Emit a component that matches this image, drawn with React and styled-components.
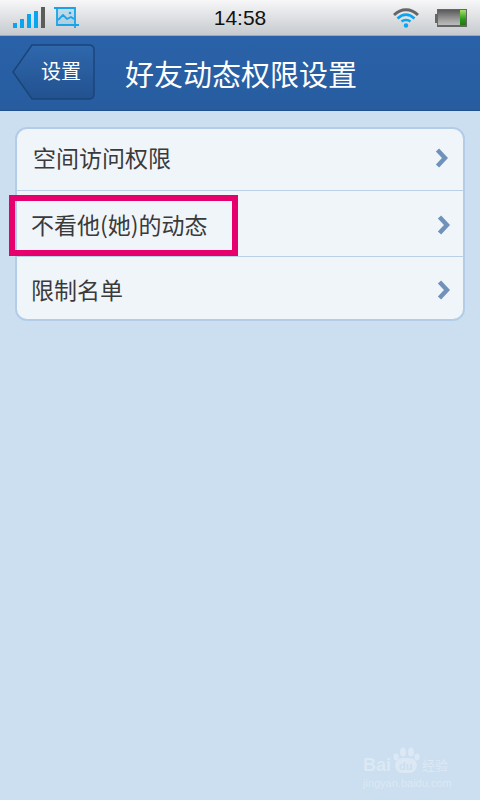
import React from "react";
import styled, { createGlobalStyle } from "styled-components";

const cjk = `"Noto Sans CJK SC", "Liberation Sans", sans-serif`;

const GlobalStyle = createGlobalStyle`
  html, body {
    margin: 0;
    padding: 0;
    background: #cbdff1;
  }
`;

const Screen = styled.div`
  position: relative;
  width: 480px;
  height: 800px;
  overflow: hidden;
  background: #cbdff1;
  font-family: ${cjk};
`;

const StatusBar = styled.div`
  display: grid;
  grid-template-columns: 1fr auto 1fr;
  align-items: center;
  box-sizing: border-box;
  height: 36px;
  background: linear-gradient(#f7f7f8, #c6cace);
  border-bottom: 1px solid #a5a8aa;
`;

const StatusLeft = styled.div`
  display: flex;
  align-items: center;
  gap: 9px;
  padding-left: 13px;
`;

const StatusRight = styled.div`
  display: flex;
  align-items: center;
  justify-content: flex-end;
  gap: 16px;
  padding-right: 13px;
`;

const Clock = styled.div`
  font-family: "Liberation Sans", sans-serif;
  font-size: 21px;
  color: #111;
`;

const Header = styled.div`
  display: flex;
  align-items: center;
  box-sizing: border-box;
  height: 75px;
  padding-left: 12px;
  background: linear-gradient(#2a62a9, #275c9f);
  border-bottom: 1px solid #1f5190;
`;

const BackButton = styled.div`
  position: relative;
  width: 83px;
  height: 56px;
  margin-bottom: 3px;
  display: flex;
  align-items: center;
  justify-content: flex-end;
  padding: 0 14px 2px 0;
  box-sizing: border-box;
  color: #fff;
  font-size: 20px;
`;

const BackShape = styled.svg`
  position: absolute;
  left: 0;
  top: 0;
`;

const BackLabel = styled.span`
  position: relative;
`;

const Title = styled.div`
  margin-left: 30px;
  color: #fff;
  font-size: 29px;
`;

const Content = styled.div`
  padding: 16px 15px 0 15px;
`;

const List = styled.div`
  border: 2px solid #b4cde6;
  border-radius: 12px;
  background: #f0f5fa;
`;

const Row = styled.div`
  display: flex;
  align-items: center;
  justify-content: space-between;
  height: ${(p) => p.$height}px;
  padding: ${(p) => p.$top}px ${(p) => p.$arrowInset}px ${(p) => p.$bottom}px ${(p) => p.$inset}px;
  border-top: ${(p) => (p.$first ? "none" : "1px solid #b9d0e6")};
  font-size: 23px;
  color: #3a3a3a;
`;

const RowLabel = styled.span`
  margin-bottom: 2px;
`;

const Highlight = styled.div`
  position: absolute;
  left: 9px;
  top: 195px;
  width: 229px;
  height: 61px;
  box-sizing: border-box;
  border: 6px solid #e5006d;
`;

const Watermark = styled.div`
  position: absolute;
  left: 363px;
  top: 747px;
  width: 97px;
  color: #dce8f4;
`;

const WatermarkTop = styled.div`
  display: flex;
  align-items: flex-end;
  height: 26px;
  font-family: "Liberation Sans", sans-serif;
  font-size: 18px;
  font-weight: bold;
  line-height: 16px;
`;

const WatermarkCn = styled.span`
  font-family: ${cjk};
  font-size: 13px;
  font-weight: 400;
  line-height: 16px;
  margin-left: 2px;
`;

const WatermarkUrl = styled.div`
  margin-top: 4px;
  font-family: "Liberation Sans", sans-serif;
  font-size: 11px;
  line-height: 12px;
  white-space: nowrap;
`;

const PawLetters = styled.text`
  font-family: "Liberation Sans", sans-serif;
  font-size: 11px;
  font-weight: bold;
  fill: #cbdff1;
`;

function Signal() {
  return (
    <svg width="32" height="21" viewBox="0 0 32 21" style={{ display: "block" }}>
      <rect x="0" y="16" width="4" height="5" fill="#0aa5ef" />
      <rect x="7" y="12" width="4" height="9" fill="#0aa5ef" />
      <rect x="14" y="7" width="4" height="14" fill="#0aa5ef" />
      <rect x="21" y="4" width="4" height="17" fill="#0aa5ef" />
      <rect x="28" y="0" width="4" height="21" fill="#5c5c5c" />
    </svg>
  );
}

function PictureIcon() {
  return (
    <svg width="25" height="21" viewBox="0 0 25 21" fill="none" stroke="#1aa3e8" strokeWidth="1.8" style={{ display: "block" }}>
      <rect x="3" y="2" width="18" height="16" fill="#1aa3e8" fillOpacity="0.2" stroke="none" />
      <path d="M0 1 H21 V21 M3 0 V18 H25" />
      <path d="M4 13 L9 8 L13 12 L17 10 L20 12" />
      <circle cx="16" cy="6" r="1.3" fill="#1aa3e8" stroke="none" />
    </svg>
  );
}

function Wifi() {
  return (
    <svg width="26" height="20" viewBox="0 0 26 20" fill="none" style={{ display: "block" }}>
      <path d="M1 7 C8 0 18 0 25 7" stroke="#666" strokeWidth="3" />
      <path d="M4.5 10.5 C10 5.5 16 5.5 21.5 10.5" stroke="#0aa5ef" strokeWidth="2.8" />
      <path d="M8.5 13.5 C11 11.5 15 11.5 17.5 13.5" stroke="#0aa5ef" strokeWidth="2.6" />
      <circle cx="13" cy="17.5" r="2.2" fill="#0aa5ef" />
    </svg>
  );
}

function Battery() {
  return (
    <svg width="32" height="18" viewBox="0 0 32 18" style={{ display: "block" }}>
      <defs>
        <linearGradient id="cellGrey" x1="0" y1="0" x2="0" y2="1">
          <stop offset="0" stopColor="#5a5a5a" />
          <stop offset="0.75" stopColor="#a8a8a8" />
          <stop offset="1" stopColor="#bcbcbc" />
        </linearGradient>
        <linearGradient id="cellGreen" x1="0" y1="0" x2="0" y2="1">
          <stop offset="0" stopColor="#a4e06a" />
          <stop offset="0.6" stopColor="#2f9a1c" />
          <stop offset="1" stopColor="#1d7a10" />
        </linearGradient>
      </defs>
      <rect x="0" y="5" width="3" height="9" fill="#666" />
      <rect x="2" y="0" width="30" height="18" fill="#666" />
      <rect x="3" y="1" width="22" height="15" fill="url(#cellGrey)" />
      <rect x="25" y="1" width="6" height="15" fill="url(#cellGreen)" />
    </svg>
  );
}

function BackPlate() {
  return (
    <BackShape width="83" height="56" viewBox="0 0 83 56">
      <defs>
        <linearGradient id="backFill" x1="0" y1="0" x2="0" y2="1">
          <stop offset="0" stopColor="#2f68ad" />
          <stop offset="1" stopColor="#22518f" />
        </linearGradient>
      </defs>
      <path
        d="M20 1 H77 Q82 1 82 6 V50 Q82 55 77 55 H20 L1 28 Z"
        fill="url(#backFill)"
        stroke="#1b4478"
        strokeWidth="1.4"
        strokeLinejoin="round"
      />
    </BackShape>
  );
}

function Chevron() {
  return (
    <svg width="13" height="20" viewBox="0 0 13 20" fill="none" style={{ display: "block" }}>
      <path d="M2.5 2 L10 10 L2.5 18" stroke="#7092ba" strokeWidth="4.5" />
    </svg>
  );
}

function BaiduPaw() {
  return (
    <svg width="28" height="26" viewBox="0 0 28 26" fill="#dce8f4" style={{ display: "block", marginLeft: "1px" }}>
      <ellipse cx="4" cy="10" rx="2.6" ry="3.4" />
      <ellipse cx="11" cy="5" rx="3" ry="4.5" />
      <ellipse cx="19" cy="5" rx="3" ry="4.5" />
      <ellipse cx="25" cy="10" rx="2.6" ry="3.4" />
      <rect x="3" y="11" width="22" height="15" rx="7.5" />
      <PawLetters x="7" y="23">du</PawLetters>
    </svg>
  );
}

const rows = [
  { label: "空间访问权限", height: 57, top: 0, bottom: 4, inset: 16, arrowInset: 15 },
  { label: "不看他(她)的动态", height: 62, top: 3, bottom: 0, inset: 14, arrowInset: 13 },
  { label: "限制名单", height: 59, top: 3, bottom: 0, inset: 14, arrowInset: 13 },
];

export default function App() {
  return (
    <Screen>
      <GlobalStyle />
      <StatusBar>
        <StatusLeft>
          <Signal />
          <PictureIcon />
        </StatusLeft>
        <Clock>14:58</Clock>
        <StatusRight>
          <Wifi />
          <Battery />
        </StatusRight>
      </StatusBar>
      <Header>
        <BackButton>
          <BackPlate />
          <BackLabel>设置</BackLabel>
        </BackButton>
        <Title>好友动态权限设置</Title>
      </Header>
      <Content>
        <List>
          {rows.map((row, i) => (
            <Row
              key={row.label}
              $first={i === 0}
              $height={row.height}
              $top={row.top}
              $bottom={row.bottom}
              $inset={row.inset}
              $arrowInset={row.arrowInset}
            >
              <RowLabel>{row.label}</RowLabel>
              <Chevron />
            </Row>
          ))}
        </List>
      </Content>
      <Highlight />
      <Watermark>
        <WatermarkTop>
          Bai
          <BaiduPaw />
          <WatermarkCn>经验</WatermarkCn>
        </WatermarkTop>
        <WatermarkUrl>jingyan.baidu.com</WatermarkUrl>
      </Watermark>
    </Screen>
  );
}
